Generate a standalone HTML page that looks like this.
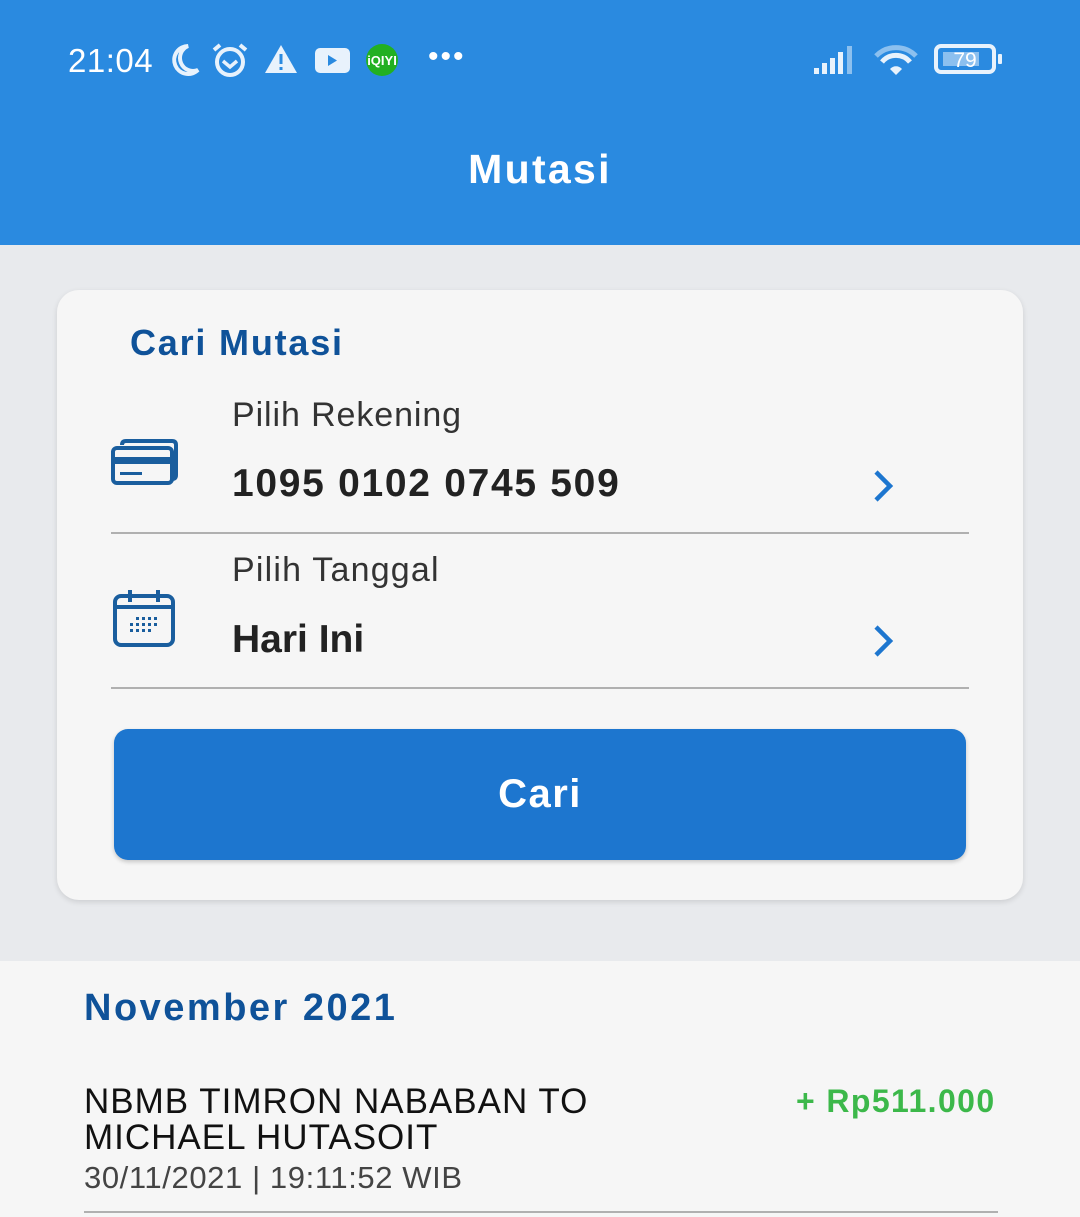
<!DOCTYPE html>
<html><head><meta charset="utf-8"><style>
*{margin:0;padding:0;box-sizing:border-box}
body{width:1080px;height:1217px;overflow:hidden;background:#e8eaed;font-family:"Liberation Sans",sans-serif;position:relative}
.hdr{position:absolute;left:0;top:0;width:1080px;height:245px;background:#2a8ae0}
.t{position:absolute;color:#fff;white-space:nowrap}
.card{position:absolute;left:57px;top:290px;width:966px;height:610px;background:#f6f6f6;border-radius:22px;box-shadow:0 2px 6px rgba(0,0,0,.12)}
.line{position:absolute;left:111px;width:858px;height:2px;background:#b0b0b0}
.btn{position:absolute;left:114px;top:729px;width:852px;height:131px;background:#1d76cf;border-radius:14px;box-shadow:0 2px 4px rgba(0,0,0,.2);color:#fff;font-weight:bold;font-size:40px;text-align:center;line-height:131px;letter-spacing:1.5px}
.low{position:absolute;left:0;top:961px;width:1080px;height:256px;background:#f6f6f6}
</style></head><body>
<div class="hdr"></div>
<div class="t" style="left:68px;top:42px;font-size:33px;letter-spacing:0.5px">21:04</div>
<svg style="position:absolute;left:160px;top:40px" width="260" height="40" viewBox="0 0 260 40">
<path d="M28 6a14 14 0 1 0 10 24a12 12 0 0 1 -10 -24z" fill="none" stroke="#e8f2fc" stroke-width="4"/>
<circle cx="70" cy="22" r="13" fill="none" stroke="#e8f2fc" stroke-width="4"/><path d="M63 21l7 6 7-6" fill="none" stroke="#e8f2fc" stroke-width="3.5"/><path d="M54 10l6-5M86 10l-6-5" stroke="#e8f2fc" stroke-width="4"/>
<path d="M121 5l16 28h-32z" fill="#e8f2fc"/><rect x="119.5" y="14" width="3" height="10" fill="#2a8ae0"/><rect x="119.5" y="27" width="3" height="3" fill="#2a8ae0"/>
<rect x="155" y="8" width="35" height="25" rx="5" fill="#e8f2fc"/><path d="M168 15v11l9-5.5z" fill="#2a8ae0"/>
<circle cx="222" cy="20" r="16" fill="#22b022"/><text x="222" y="25" font-size="13" font-weight="bold" fill="#fff" text-anchor="middle" font-family="Liberation Sans">iQIYI</text>
</svg>
<div class="t" style="left:428px;top:40px;font-size:30px;letter-spacing:2px">•••</div>
<svg style="position:absolute;left:810px;top:42px" width="200" height="36" viewBox="0 0 200 36">
<rect x="4" y="26" width="5" height="6" fill="#e8f2fc"/><rect x="12" y="21" width="5" height="11" fill="#e8f2fc"/><rect x="20" y="16" width="5" height="16" fill="#e8f2fc"/><rect x="28" y="10" width="5" height="22" fill="#e8f2fc"/><rect x="37" y="4" width="5" height="28" fill="#8cc0ef"/>
<path d="M66 14a28 28 0 0 1 40 0" fill="none" stroke="#8cc0ef" stroke-width="5"/><path d="M72 20a18 18 0 0 1 28 0" fill="none" stroke="#e8f2fc" stroke-width="5"/><path d="M80 27a8 8 0 0 1 12 0l-6 6z" fill="#e8f2fc"/>
<rect x="126" y="4" width="58" height="26" rx="5" fill="none" stroke="#e8f2fc" stroke-width="4"/><rect x="133" y="10" width="36" height="14" fill="#8cc0ef"/><text x="155" y="25" font-size="21" fill="#fff" text-anchor="middle" font-family="Liberation Sans">79</text><rect x="188" y="12" width="4" height="10" rx="1" fill="#e8f2fc"/>
</svg>
<div class="t" style="left:0;width:1080px;text-align:center;top:146px;font-size:41px;font-weight:bold;letter-spacing:2.3px">Mutasi</div>
<div class="card"></div>
<div class="t" style="left:130px;top:322px;font-size:36px;font-weight:bold;color:#0f5299;letter-spacing:1.8px">Cari Mutasi</div>
<div class="t" style="left:232px;top:396px;font-size:34px;color:#333;letter-spacing:0.9px">Pilih Rekening</div>
<div class="t" style="left:232px;top:462px;font-size:39px;font-weight:bold;color:#222;letter-spacing:1.7px">1095 0102 0745 509</div>
<div class="t" style="left:232px;top:551px;font-size:34px;color:#333;letter-spacing:1.2px">Pilih Tanggal</div>
<div class="t" style="left:232px;top:618px;font-size:39px;font-weight:bold;color:#222">Hari Ini</div>
<svg style="position:absolute;left:110px;top:438px" width="70" height="52" viewBox="0 0 70 52"><path d="M12 7q0-4 4-4h46q4 0 4 4v30q0 4-4 4" fill="none" stroke="#1a5e9e" stroke-width="4"/><rect x="3" y="10" width="59" height="35" rx="4" fill="#f6f6f6" stroke="#1a5e9e" stroke-width="4"/><rect x="3" y="19" width="59" height="7" fill="#1a5e9e"/><rect x="10" y="34" width="22" height="3" fill="#1a5e9e"/></svg>
<svg style="position:absolute;left:110px;top:588px" width="68" height="62" viewBox="0 0 68 62"><rect x="5" y="8" width="58" height="49" rx="6" fill="none" stroke="#1a5e9e" stroke-width="4"/><path d="M5 19h58M20 2v12M48 2v12" stroke="#1a5e9e" stroke-width="4"/><g fill="#1a5e9e"><rect x="26" y="29" width="3" height="3"/><rect x="32" y="29" width="3" height="3"/><rect x="38" y="29" width="3" height="3"/><rect x="44" y="29" width="3" height="3"/><rect x="20" y="35" width="3" height="3"/><rect x="26" y="35" width="3" height="3"/><rect x="32" y="35" width="3" height="3"/><rect x="38" y="35" width="3" height="3"/><rect x="44" y="35" width="3" height="3"/><rect x="20" y="41" width="3" height="3"/><rect x="26" y="41" width="3" height="3"/><rect x="32" y="41" width="3" height="3"/><rect x="38" y="41" width="3" height="3"/></g></svg>
<svg style="position:absolute;left:872px;top:469px" width="24" height="34"><path d="M4 3l14 14-14 14" fill="none" stroke="#1d76cf" stroke-width="4.5"/></svg>
<svg style="position:absolute;left:872px;top:624px" width="24" height="34"><path d="M4 3l14 14-14 14" fill="none" stroke="#1d76cf" stroke-width="4.5"/></svg>
<div class="line" style="top:532px"></div>
<div class="line" style="top:687px"></div>
<div class="btn">Cari</div>
<div class="low"></div>
<div class="t" style="left:84px;top:987px;font-size:38px;font-weight:bold;color:#0f5299;letter-spacing:2.5px">November 2021</div>
<div class="t" style="left:84px;top:1084px;font-size:35px;color:#111;line-height:36px;letter-spacing:1px">NBMB TIMRON NABABAN TO<br>MICHAEL HUTASOIT</div>
<div class="t" style="left:84px;top:1160px;font-size:31px;color:#444;letter-spacing:0.6px">30/11/2021 | 19:11:52 WIB</div>
<div class="t" style="left:796px;top:1083px;font-size:32px;font-weight:bold;color:#3cb84a;letter-spacing:1.4px">+ Rp511.000</div>
<div style="position:absolute;left:84px;top:1211px;width:914px;height:2px;background:#b0b0b0"></div>
</body></html>
